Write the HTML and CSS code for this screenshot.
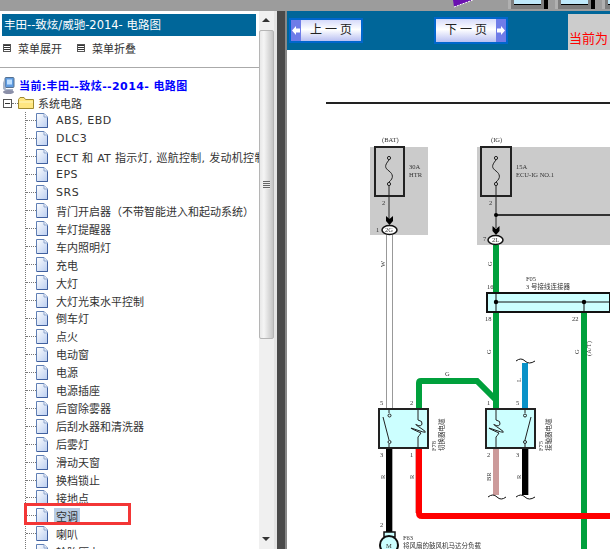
FILE: index.html
```html
<!DOCTYPE html>
<html lang="zh-CN">
<head>
    <meta charset="UTF-8">
    <title>丰田--致炫/威驰-2014- 电路图</title>
    <link rel="stylesheet" href="styles.css">
</head>
<body>
    <svg class="defs" width="0" height="0">
        <defs>
            <linearGradient id="docFill" x1="0" y1="0" x2="1" y2="1">
                <stop offset="0" stop-color="#ffffff"/>
                <stop offset="1" stop-color="#b9cdf0"/>
            </linearGradient>
            <symbol id="doc" viewBox="0 0 12 15">
                <path d="M.5.5H8L11.5 4V14.5H.5Z" fill="url(#docFill)" stroke="#5f7fb5"/>
                <path d="M8 .5V4H11.5" fill="#e8eefa" stroke="#8fa7cf"/>
                <path d="M1 14.5H11.5V5" fill="none" stroke="#3f5f9f"/>
            </symbol>
        </defs>
    </svg>

    <div class="topbar">
        <svg class="flag" width="20" height="8" viewBox="0 0 20 8"><path d="M0 0H20L1 7Z" fill="#6a10b0"/><path d="M1 7L20 0" stroke="#fff" stroke-dasharray="2 1"/></svg>
        <div class="tile"><span class="pane"></span></div>
        <div class="tile"><span class="pane"></span></div>
        <div class="tile"><span class="pane"></span></div>
    </div>

    <div class="main">
        <div class="left">
            <div class="left-content">
                <div class="title">丰田--致炫/威驰-2014- 电路图</div>
                <div class="menu">
                    <span class="menu-icon"></span><span class="menu-label">菜单展开</span>
                    <span class="menu-icon second"></span><span class="menu-label">菜单折叠</span>
                </div>
                <div class="tree">
                    <div class="root">
                        <svg width="13" height="17" viewBox="0 0 13 17">
                            <rect x="3" y="0.500" width="9" height="10" rx="1" fill="#5f9be0" stroke="#55708f"/>
                            <rect x="5" y="2.500" width="5" height="5" fill="#bfe0ff"/>
                            <path d="M1 3V12L5 15H11V12H4Z" fill="#a8b4c8"/>
                            <ellipse cx="6.500" cy="15" rx="5.500" ry="2" fill="#8a8fa8"/>
                        </svg>
                        <span>当前:丰田--致炫--2014- 电路图</span>
                    </div>
                    <div class="branch">
                        <span class="toggle"></span>
                        <span class="dash short"></span>
                        <svg class="folder" width="16" height="12" viewBox="0 0 16 12">
                            <path d="M.5 2.500L2 .5H6L7.500 2.500H15.500V11.500H.5Z" fill="#ffe680" stroke="#a08a30"/>
                            <path d="M1 5H15" stroke="#fff6c0"/>
                        </svg>
                        <span>系统电路</span>
                    </div>
                    <ul class="leaves">
                        <li class="leaf"><span class="dash"></span><svg class="doc"><use href="#doc"/></svg><span class="name en">ABS, EBD</span></li>
                        <li class="leaf"><span class="dash"></span><svg class="doc"><use href="#doc"/></svg><span class="name en">DLC3</span></li>
                        <li class="leaf"><span class="dash"></span><svg class="doc"><use href="#doc"/></svg><span class="name mixed">ECT 和 AT 指示灯, 巡航控制, 发动机控制</span></li>
                        <li class="leaf"><span class="dash"></span><svg class="doc"><use href="#doc"/></svg><span class="name en">EPS</span></li>
                        <li class="leaf"><span class="dash"></span><svg class="doc"><use href="#doc"/></svg><span class="name en">SRS</span></li>
                        <li class="leaf"><span class="dash"></span><svg class="doc"><use href="#doc"/></svg><span class="name">背门开启器（不带智能进入和起动系统）</span></li>
                        <li class="leaf"><span class="dash"></span><svg class="doc"><use href="#doc"/></svg><span class="name">车灯提醒器</span></li>
                        <li class="leaf"><span class="dash"></span><svg class="doc"><use href="#doc"/></svg><span class="name">车内照明灯</span></li>
                        <li class="leaf"><span class="dash"></span><svg class="doc"><use href="#doc"/></svg><span class="name">充电</span></li>
                        <li class="leaf"><span class="dash"></span><svg class="doc"><use href="#doc"/></svg><span class="name">大灯</span></li>
                        <li class="leaf"><span class="dash"></span><svg class="doc"><use href="#doc"/></svg><span class="name">大灯光束水平控制</span></li>
                        <li class="leaf"><span class="dash"></span><svg class="doc"><use href="#doc"/></svg><span class="name">倒车灯</span></li>
                        <li class="leaf"><span class="dash"></span><svg class="doc"><use href="#doc"/></svg><span class="name">点火</span></li>
                        <li class="leaf"><span class="dash"></span><svg class="doc"><use href="#doc"/></svg><span class="name">电动窗</span></li>
                        <li class="leaf"><span class="dash"></span><svg class="doc"><use href="#doc"/></svg><span class="name">电源</span></li>
                        <li class="leaf"><span class="dash"></span><svg class="doc"><use href="#doc"/></svg><span class="name">电源插座</span></li>
                        <li class="leaf"><span class="dash"></span><svg class="doc"><use href="#doc"/></svg><span class="name">后窗除雾器</span></li>
                        <li class="leaf"><span class="dash"></span><svg class="doc"><use href="#doc"/></svg><span class="name">后刮水器和清洗器</span></li>
                        <li class="leaf"><span class="dash"></span><svg class="doc"><use href="#doc"/></svg><span class="name">后雾灯</span></li>
                        <li class="leaf"><span class="dash"></span><svg class="doc"><use href="#doc"/></svg><span class="name">滑动天窗</span></li>
                        <li class="leaf"><span class="dash"></span><svg class="doc"><use href="#doc"/></svg><span class="name">换档锁止</span></li>
                        <li class="leaf"><span class="dash"></span><svg class="doc"><use href="#doc"/></svg><span class="name">接地点</span></li>
                        <li class="leaf marked"><span class="dash"></span><svg class="doc"><use href="#doc"/></svg><span class="name selected">空调</span></li>
                        <li class="leaf"><span class="dash"></span><svg class="doc"><use href="#doc"/></svg><span class="name">喇叭</span></li>
                        <li class="leaf"><span class="dash"></span><svg class="doc"><use href="#doc"/></svg><span class="name">轮胎压力</span></li>
                    </ul>
                </div>
            </div>
            <div class="scrollbar">
                <div class="arrow up"></div>
                <div class="thumb"><span class="grip"></span></div>
                <div class="track"></div>
                <div class="arrow down"></div>
            </div>
        </div>
        <div class="divider"></div>
        <div class="right">
            <div class="navbar">
                <a class="page-btn prev">
                    <span class="cap"><svg width="8" height="9" viewBox="0 0 8 9"><path d="M0 4.500L4 0V2.500H8V6.500H4V9Z" fill="#fff"/></svg></span>
                    <span class="btn-text">上 一 页</span>
                </a>
                <a class="page-btn next">
                    <span class="btn-text">下 一 页</span>
                    <span class="cap"><svg width="8" height="9" viewBox="0 0 8 9"><path d="M8 4.500L4 0V2.500H0V6.500H4V9Z" fill="#fff"/></svg></span>
                </a>
                <div class="current">当前为</div>
            </div>
            <svg class="diagram" width="323" height="499" viewBox="287 50 323 499">
                <path d="M326 103H610" stroke="#222" stroke-width="2"/>

                <!-- power boxes -->
                <rect x="370" y="147" width="58" height="88" fill="#cbcbcb"/>
                <rect x="477" y="147" width="133" height="98" fill="#cbcbcb"/>
                <g class="box">
                    <rect x="375" y="147" width="29" height="49" fill="#cbcbcb"/>
                    <rect x="481" y="147" width="30" height="49" fill="#cbcbcb"/>
                </g>
                <g fill="none" stroke="#222" stroke-width="1">
                    <circle cx="389" cy="158" r="1.600"/>
                    <circle cx="389" cy="184" r="1.600"/>
                    <path d="M389 160C384 166 385 168 389 171S394 178 389 182"/>
                    <circle cx="496" cy="158" r="1.600"/>
                    <circle cx="496" cy="184" r="1.600"/>
                    <path d="M496 160C491 166 492 168 496 171S501 178 496 182"/>
                    <path d="M389 186V220M496 186V228"/>
                </g>
                <path d="M496 215H610" stroke="#333" stroke-width="2"/>
                <circle cx="496" cy="215" r="2" fill="#000"/>
                <path d="M386 216L389.500 219 393 216V221L389.500 225 386 221Z" fill="#000"/>
                <path d="M492.500 226L496 229 499.500 226V231L496 235 492.500 231Z" fill="#000"/>

                <!-- wires -->
                <path d="M386.500 235V409M392.500 235V409" stroke="#999" stroke-width="1"/>
                <g fill="none" stroke="#00a03c" stroke-width="6">
                    <path d="M496 245V409"/>
                    <path d="M584 312V549"/>
                    <path d="M419 409V383Q419 381 421 381H477L496 400"/>
                </g>
                <path d="M525 363V409" stroke="#0a92c8" stroke-width="6"/>
                <path d="M389 448V535M525 448V495" stroke="#000" stroke-width="6"/>
                <path d="M392.500 448V532M528.500 448V495" stroke="#aaa" stroke-width="1"/>
                <path d="M496 448V495" stroke="#cc9a9a" stroke-width="6"/>
                <path d="M419 448V513Q419 516 422 516H610" fill="none" stroke="#f00" stroke-width="6"/>
                <path d="M415.500 448V513" stroke="#e8a8a8" stroke-width="1"/>
                <path d="M516 361Q521 357 525 361T535 361M488 497Q493 493 497 497T506 497M516 497Q521 493 525 497T535 497" fill="none" stroke="#111" stroke-width="1"/>

                <!-- connector ovals -->
                <ellipse cx="389.500" cy="230" rx="7.500" ry="4.500" fill="#fff" stroke="#111" stroke-width="1.500"/>
                <ellipse cx="495.500" cy="240" rx="7.500" ry="4.500" fill="#fff" stroke="#111" stroke-width="1.500"/>

                <!-- junction block -->
                <rect x="487" y="293" width="123" height="19" fill="#ccffff" stroke="#111" stroke-width="2"/>
                <path d="M496 302H610M584 302V312M496 293V312" fill="none" stroke="#111" stroke-width="1"/>
                <circle cx="496" cy="302" r="2.200" fill="#000"/>
                <circle cx="584" cy="302" r="2.200" fill="#000"/>

                <!-- relays -->
                <rect x="379" y="409" width="49" height="39" fill="#ccffff" stroke="#222" stroke-width="2"/>
                <rect x="486" y="409" width="49" height="39" fill="#ccffff" stroke="#222" stroke-width="2"/>
                <g fill="none" stroke="#222" stroke-width="1">
                    <path d="M389 409V413M389 444V448M383 417L389 440"/>
                    <circle cx="389.500" cy="415.500" r="1.500"/>
                    <circle cx="389.500" cy="442" r="1.500"/>
                    <path d="M418 409V420Q423 421 422 424T417 425T422 429T417 430T421 433Q419 436 418 437V448"/>
                    <path d="M525 409V413M525 444V448M531 417L525 440"/>
                    <circle cx="525" cy="415.500" r="1.500"/>
                    <circle cx="525" cy="442" r="1.500"/>
                    <path d="M496 409V420Q501 421 500 424T495 425T500 429T495 430T499 433Q497 436 496 437V448"/>
                </g>

                <!-- motor -->
                <rect x="384" y="532" width="11" height="5" fill="#ccffff" stroke="#111" stroke-width="1.500"/>
                <circle cx="389" cy="545" r="9" fill="#ccffff" stroke="#111" stroke-width="2"/>

                <g class="label">
                    <text x="382" y="142">(BAT)</text>
                    <text x="491" y="142">(IG)</text>
                    <text x="409" y="169">30A</text>
                    <text x="409" y="177">HTR</text>
                    <text x="516" y="169">15A</text>
                    <text x="516" y="177">ECU-IG NO.1</text>
                    <text x="382" y="205">2</text>
                    <text x="489" y="205">2</text>
                    <text x="376" y="232">1</text>
                    <text x="483" y="241">7</text>
                    <text x="385" y="232">2G</text>
                    <text x="492" y="242">2L</text>
                    <text x="487" y="289">16</text>
                    <text x="526" y="281">F05</text>
                    <text x="526" y="289">3 号接线连接器</text>
                    <text x="485" y="321">18</text>
                    <text x="572" y="321">22</text>
                    <text x="445" y="376">G</text>
                    <text x="380" y="405">5</text>
                    <text x="410" y="405">2</text>
                    <text x="487" y="405">1</text>
                    <text x="516" y="405">5</text>
                    <text x="380" y="457">3</text>
                    <text x="410" y="457">1</text>
                    <text x="487" y="457">2</text>
                    <text x="516" y="457">3</text>
                    <text x="380" y="527">2</text>
                    <text x="386" y="548">M</text>
                    <text x="403" y="540">F63</text>
                    <text x="403" y="548">将风扇的鼓风机马达分负载</text>
                    <text transform="translate(385 267) rotate(-90)">W</text>
                    <text transform="translate(492 266) rotate(-90)">G</text>
                    <text transform="translate(491 354) rotate(-90)">G</text>
                    <text transform="translate(579 354) rotate(-90)">G</text>
                    <text transform="translate(591 356) rotate(-90)">(A/T)</text>
                    <text transform="translate(521 382) rotate(-90)">L</text>
                    <text transform="translate(385 479) rotate(-90)">R</text>
                    <text transform="translate(414 479) rotate(-90)">R</text>
                    <text transform="translate(491 481) rotate(-90)">BR</text>
                    <text transform="translate(521 479) rotate(-90)">R</text>
                    <text transform="translate(436 451) rotate(-90)">F78</text>
                    <text transform="translate(444 451) rotate(-90)">切换器电磁</text>
                    <text transform="translate(543 451) rotate(-90)">F75</text>
                    <text transform="translate(551 451) rotate(-90)">接触器电磁</text>
                </g>
            </svg>
        </div>
    </div>
</body>
</html>
```

FILE: styles.css
```css
body {
    margin: 0;
    width: 610px;
    height: 549px;
    overflow: hidden;
    background-color: #fff;
    font-family: "DejaVu Sans", "Noto Sans CJK SC", sans-serif;
    font-size: 11px;
    color: #333;
}
.defs {
    display: block;
    height: 0;
}
ul {
    list-style: none;
    margin: 0;
    padding: 0;
}

/* window strip */
.topbar {
    display: flex;
    height: 11px;
    background-color: #9c9c9c;
    overflow: hidden;
    padding-left: 453px;
    box-sizing: border-box;
}
.flag {
    flex: none;
    margin-right: 35px;
}
.tile {
    flex: none;
    width: 33px;
    height: 9px;
    margin-right: 7px;
    background-color: #7d7d7d;
    border-left: 3px solid #b0b0b0;
    border-right: 4px solid #000;
}
.tile .pane {
    display: block;
    width: 27px;
    height: 4px;
    margin-left: 3px;
    background-color: #bfe9fb;
    border-bottom: 1px solid #000;
}

.main {
    display: flex;
    height: 538px;
}

/* left frame */
.left {
    display: flex;
    width: 277px;
    flex: none;
    background-color: #fff;
    border-right: 3px solid #e4e4e4;
    box-sizing: border-box;
}
.left-content {
    width: 259px;
    flex: none;
    overflow: hidden;
}
.title {
    height: 22px;
    line-height: 22px;
    margin: 3px 3px 0 2px;
    padding-left: 2px;
    background-color: #006699;
    color: #fff;
    font-size: 11.5px;
}
.menu {
    display: flex;
    align-items: center;
    height: 23px;
    padding: 0 0 8px 3px;
    border-bottom: 1px solid #aaa;
}
.menu-icon {
    width: 6px;
    height: 6px;
    border: 1px solid #555;
    background: repeating-linear-gradient(#333 0 1px, #fff 1px 2px);
}
.menu-icon.second {
    margin-left: 15px;
}
.menu-label {
    margin-left: 7px;
}

/* tree */
.tree {
    padding-top: 8px;
}
.root {
    display: flex;
    align-items: center;
    height: 18px;
    padding-left: 2px;
    color: #0000ff;
    font-weight: bold;
}
.root span {
    margin-left: 4px;
    letter-spacing: 0.4px;
    white-space: nowrap;
}
.branch {
    display: flex;
    align-items: center;
    height: 18px;
    padding-left: 3px;
}
.toggle {
    width: 7px;
    height: 7px;
    border: 1px solid #555;
    background: linear-gradient(#333, #333) center / 5px 1px no-repeat #fff;
}
.dash {
    width: 10px;
    border-top: 1px dotted #777;
    flex: none;
}
.dash.short {
    width: 6px;
}
.folder {
    margin-right: 4px;
}
.leaves {
    margin-left: 25px;
    border-left: 1px dotted #777;
}
.leaf {
    display: flex;
    align-items: center;
    height: 17.96px;
    white-space: nowrap;
}
.doc {
    width: 12px;
    height: 15px;
    flex: none;
}
.name {
    margin-left: 6px;
    padding: 0 2px;
}
.name.en {
    letter-spacing: 0.5px;
}
.name.mixed {
    letter-spacing: 0.3px;
}
.name.selected {
    background-color: #b8cce4;
}
.marked {
    position: relative;
}
.marked::after {
    content: "";
    position: absolute;
    left: -2px;
    top: -4px;
    width: 101px;
    height: 16px;
    border: 3px solid #f33636;
}

/* scrollbar */
.scrollbar {
    display: flex;
    flex-direction: column;
    width: 15px;
    flex: none;
    background-color: #f0f0f0;
}
.arrow {
    height: 19px;
    flex: none;
    position: relative;
}
.arrow::after {
    content: "";
    position: absolute;
    left: 3px;
    top: 7px;
    border-left: 4px solid transparent;
    border-right: 4px solid transparent;
}
.arrow.up::after {
    border-bottom: 4px solid #333;
}
.arrow.down::after {
    border-top: 4px solid #333;
}
.thumb {
    display: flex;
    align-items: center;
    justify-content: center;
    height: 309px;
    flex: none;
    background: linear-gradient(90deg, #e8e8e8, #f5f5f5 30%, #c4c4c4);
    border: 1px solid #b5b5b5;
    border-radius: 2px;
    box-sizing: border-box;
}
.grip {
    width: 7px;
    height: 8px;
    background: repeating-linear-gradient(#666 0 1px, #eee 1px 2px);
}
.track {
    flex: 1;
}

.divider {
    width: 8px;
    flex: none;
    background-color: #4a4a4a;
}

/* right frame */
.right {
    width: 325px;
    flex: none;
    border-left: 2px solid #888;
    box-sizing: border-box;
    background-color: #fff;
}
.navbar {
    display: flex;
    align-items: center;
    height: 39px;
    background-color: #006699;
}
.page-btn {
    display: flex;
    align-items: stretch;
    width: 70px;
    height: 21px;
    border: 2px solid #0066cc;
    background: linear-gradient(#d5dafa, #ffffff 45%, #b9c0f2);
    color: #222;
    font-size: 12px;
    line-height: 21px;
    font-family: "Liberation Serif", "Noto Sans CJK SC", serif;
}
.prev {
    margin-left: 2px;
}
.next {
    margin-left: 71px;
    height: 23px;
    line-height: 23px;
}
.cap {
    display: flex;
    align-items: center;
    justify-content: center;
    width: 10px;
    flex: none;
    background-color: #6f7ce8;
}
.btn-text {
    flex: 1;
    text-align: center;
}
.current {
    width: 42px;
    height: 36px;
    margin-left: 60px;
    margin-top: 2px;
    padding: 16px 0 0 1px;
    box-sizing: border-box;
    overflow: hidden;
    white-space: nowrap;
    background-color: #cccccc;
    color: #ff0000;
    font-size: 13px;
    line-height: 18px;
}
.diagram {
    display: block;
    filter: blur(0.4px);
}
.box rect {
    stroke: #222;
    stroke-width: 2;
}
.label text {
    font-family: "Liberation Serif", "Noto Sans CJK SC", serif;
    font-size: 6.5px;
    fill: #333;
}
```
